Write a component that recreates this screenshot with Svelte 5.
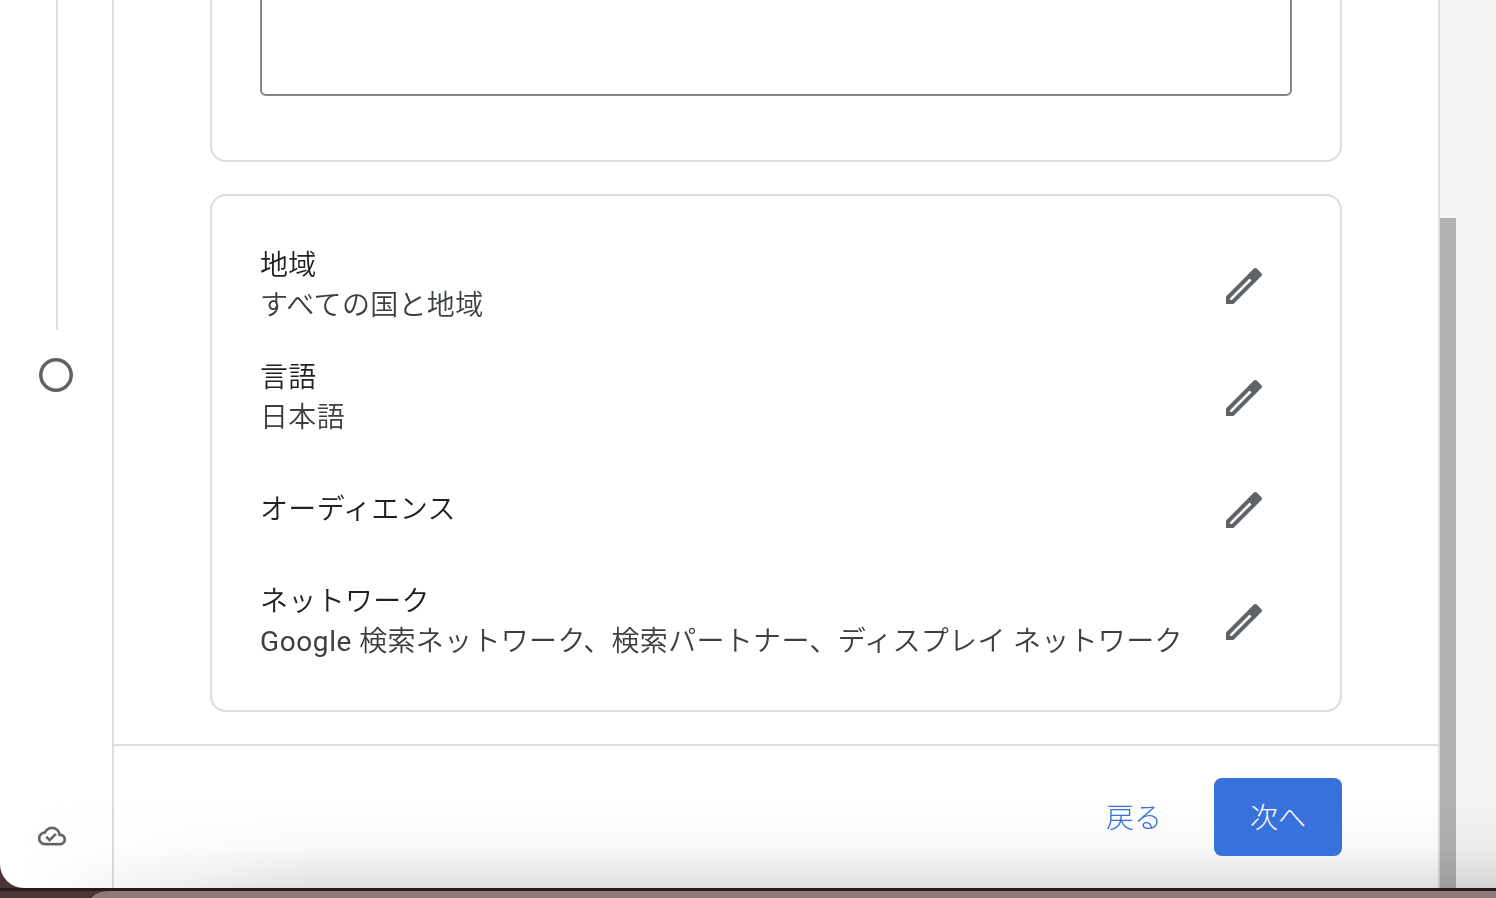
<script lang="ts">
  const rows = [
    { title: "地域", lead: "", value: "すべての国と地域" },
    { title: "言語", lead: "", value: "日本語" },
    { title: "オーディエンス", lead: "", value: "" },
    { title: "ネットワーク", lead: "Google", value: " 検索ネットワーク、検索パートナー、ディスプレイ ネットワーク" },
  ];
</script>

<div class="screen">
  <div class="window">
    <aside class="rail">
      <div class="rail-line"></div>
      <svg class="step-dot" width="34" height="34" viewBox="0 0 34 34" fill="none" stroke="#5f6368" stroke-width="3.5">
        <circle cx="17" cy="17" r="15.2" />
      </svg>
      <svg class="cloud" width="28" height="28" viewBox="0 0 24 24" fill="#5f6368" stroke="#5f6368" stroke-width="0.3">
        <path d="M19.35 10.04C18.67 6.59 15.64 4 12 4 9.11 4 6.6 5.64 5.35 8.04 2.34 8.36 0 10.91 0 14c0 3.31 2.69 6 6 6h13c2.76 0 5-2.24 5-5 0-2.64-2.05-4.78-4.65-4.96zM19 18H6c-2.21 0-4-1.79-4-4 0-2.05 1.53-3.76 3.56-3.97l1.07-.11.5-.95C8.08 7.14 9.94 6 12 6c2.62 0 4.88 1.86 5.39 4.43l.3 1.5 1.53.11c1.56.1 2.78 1.41 2.78 2.96 0 1.65-1.35 3-3 3zm-9-3.82l-2.09-2.09L6.5 13.5 10 17l6.01-6.01-1.41-1.41z" />
      </svg>
    </aside>

    <main class="main">
      <div class="scroll">
        <section class="card first">
          <div class="textarea"></div>
        </section>
        <section class="card settings">
          {#each rows as row}
            <div class="row">
              <div class="row-text">
                <div class="row-title">{row.title}</div>
                {#if row.value}
                  <div class="row-value">{#if row.lead}<span class="latin">{row.lead}</span>{/if}{row.value}</div>
                {/if}
              </div>
              <svg class="pencil" width="48" height="48" viewBox="0 0 24 24" fill="#5f6368" fill-rule="evenodd">
                <path d="M3 17.25V21h3.75L20.71 7.04c.39-.39.39-1.02 0-1.41l-2.34-2.34c-.2-.2-.45-.29-.71-.29s-.51.1-.7.29L3 17.25zM5.92 19H5v-.92L14.8 8.3l.92.92L5.92 19z" />
              </svg>
            </div>
          {/each}
        </section>
      </div>
      <footer class="footer">
        <button type="button" class="back">戻る</button>
        <button type="button" class="next">次へ</button>
      </footer>
    </main>

    <div class="scrollbar"><div class="thumb"></div></div>
    <div class="side-panel"></div>
    <div class="fade"></div>
  </div>
  <div class="desktop"><div class="behind"></div></div>
</div>

<style>
  :global(body) {
    margin: 0;
    overflow: hidden;
    background: #4a3538;
  }

  .screen {
    width: 1496px;
    height: 898px;
    display: flex;
    flex-direction: column;
    font-family: Roboto, "Noto Sans CJK JP", sans-serif;
    letter-spacing: 0.32px;
  }

  .window {
    position: relative;
    height: 888px;
    display: flex;
    flex-shrink: 0;
  }

  .rail {
    width: 112px;
    flex-shrink: 0;
    display: flex;
    flex-direction: column;
    background: #fff;
    border-right: 2px solid #dadce0;
    border-bottom-left-radius: 24px;
  }

  .rail-line {
    width: 2px;
    height: 330px;
    margin-left: 56px;
    background: #dadce0;
  }

  .step-dot {
    margin: 28px 0 0 39px;
  }

  .cloud {
    margin: auto 0 38px 38px;
  }

  .main {
    width: 1324px;
    flex-shrink: 0;
    display: flex;
    flex-direction: column;
    background: #fff;
    border-right: 2px solid #dadce0;
  }

  .scroll {
    flex: 1;
    min-height: 0;
    overflow: hidden;
    display: flex;
    flex-direction: column;
    justify-content: flex-end;
    gap: 32px;
    padding: 0 96px 32px;
  }

  .card {
    flex-shrink: 0;
    border: 2px solid #dadce0;
    border-radius: 16px;
  }

  .first {
    padding: 0 48px 64px;
  }

  .textarea {
    height: 200px;
    box-sizing: border-box;
    border: 2px solid #80868b;
    border-radius: 6px;
  }

  .settings {
    padding: 34px 48px 32px;
  }

  .row {
    height: 112px;
    display: flex;
    align-items: center;
    justify-content: space-between;
  }

  .row-text {
    font-size: 28px;
    font-weight: 350;
    line-height: 40px;
  }

  .row-title {
    color: #202124;
  }

  .row-value {
    color: #3c4043;
  }

  .latin {
    font-weight: 400;
    letter-spacing: 0.6px;
  }

  .pencil {
    flex-shrink: 0;
    margin-right: 24px;
  }

  .footer {
    height: 144px;
    flex-shrink: 0;
    box-sizing: border-box;
    display: flex;
    align-items: flex-start;
    justify-content: flex-end;
    gap: 22px;
    padding: 32px 96px 0;
    border-top: 2px solid #dadce0;
  }

  .footer button {
    position: relative;
    z-index: 2;
    height: 78px;
    padding: 0 30px 2px;
    border: 0;
    border-radius: 8px;
    font: inherit;
    font-size: 28px;
    font-weight: 300;
  }

  .back {
    background: transparent;
    color: #3871dc;
  }

  .next {
    width: 128px;
    background: #3871dc;
    color: #fff;
  }

  .scrollbar {
    width: 16px;
    flex-shrink: 0;
    display: flex;
    flex-direction: column;
    justify-content: flex-end;
    background: #f1f3f4;
  }

  .thumb {
    height: 670px;
    background: #b2b2b4;
  }

  .side-panel {
    flex: 1;
    background: #f1f3f4;
  }

  .fade {
    position: absolute;
    left: 0;
    right: 0;
    bottom: 0;
    height: 90px;
    z-index: 1;
    pointer-events: none;
    background: linear-gradient(180deg, rgb(255 255 255 / 0%), #f8f8f8 55%, #e0e0e0);
    mix-blend-mode: multiply;
    mask-image: linear-gradient(90deg, transparent 20px, #000 320px);
  }

  .desktop {
    flex: 1;
    border-top: 3px solid #2a1a1e;
    background: #4a3538;
    overflow: hidden;
  }

  .behind {
    height: 40px;
    margin-left: 84px;
    background: #8c7a7c;
    border-top-left-radius: 24px;
  }
</style>
